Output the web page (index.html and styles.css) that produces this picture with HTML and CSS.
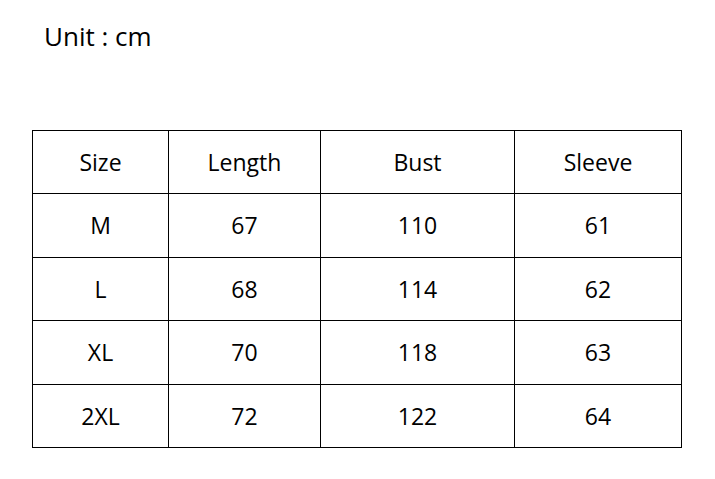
FILE: index.html
```html
<!DOCTYPE html>
<html>
<head>
<meta charset="utf-8">
<link rel="stylesheet" href="styles.css">
</head>
<body>
<div class="page">
  <div class="unit">Unit : cm</div>
  <div class="chart">
    <div class="cell">Size</div><div class="cell">Length</div><div class="cell">Bust</div><div class="cell">Sleeve</div>
    <div class="cell">M</div><div class="cell">67</div><div class="cell">110</div><div class="cell">61</div>
    <div class="cell">L</div><div class="cell">68</div><div class="cell">114</div><div class="cell">62</div>
    <div class="cell">XL</div><div class="cell">70</div><div class="cell">118</div><div class="cell">63</div>
    <div class="cell">2XL</div><div class="cell">72</div><div class="cell">122</div><div class="cell">64</div>
  </div>
</div>
</body>
</html>
```
FILE: styles.css
```css
html, body {
  margin: 0;
  padding: 0;
  background: #fff;
}
.page {
  width: 715px;
  height: 479px;
  font-family: "Open Sans", "Liberation Sans", sans-serif;
  color: #000;
  padding-top: 23px;
  box-sizing: border-box;
}
.unit {
  font-size: 26px;
  line-height: 26px;
  padding-left: 44px;
}
.chart {
  margin: 81px 0 0 32px;
  display: grid;
  grid-template-columns: 135px 151px 193px 166px;
  grid-template-rows: 62px 63px 62px 63px 62px;
  gap: 1px;
  padding: 1px;
  background: #000;
  width: max-content;
}
.cell {
  background: #fff;
  display: flex;
  align-items: center;
  justify-content: center;
  font-size: 23px;
  line-height: 1;
}
```
